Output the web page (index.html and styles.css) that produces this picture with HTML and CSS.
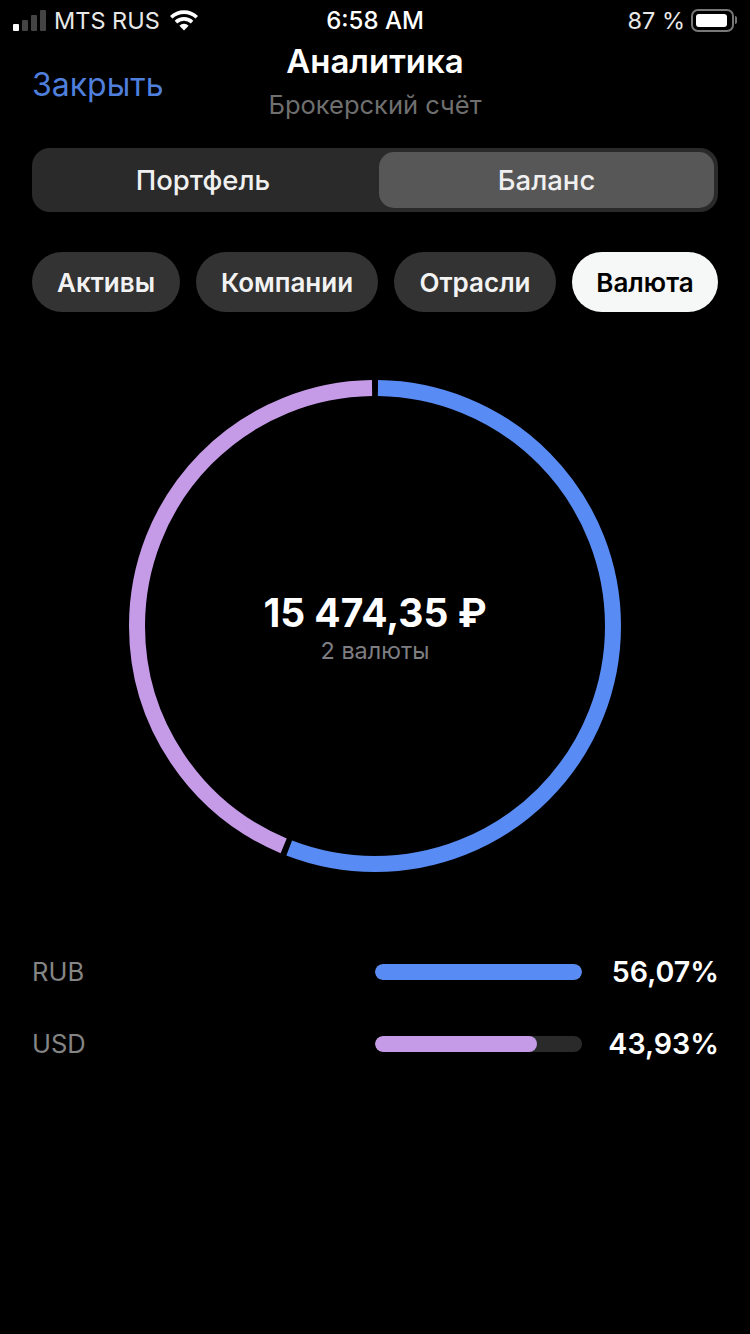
FILE: index.html
```html
<!DOCTYPE html>
<html>
<head>
    <meta charset="UTF-8">
    <title>Аналитика</title>

    <link rel="stylesheet" href="styles.css">
</head>
<body>

    <div class="status">
        <div class="status-left">
            <div class="signal">
                <i class="on b1"></i><i class="b2"></i><i class="b3"></i><i class="b4"></i>
            </div>
            <span>MTS RUS</span>
            <svg class="wifi" width="30" height="22" viewBox="0 0 30 22">
                <path d="M15 21.5l-4.6-4.8a6.6 6.6 0 0 1 9.2 0z" fill="#fff"/>
                <path d="M8.2 14.4l-2.5-2.6a13.4 13.4 0 0 1 18.6 0l-2.5 2.6a9.9 9.9 0 0 0-13.6 0z" fill="#fff"/>
                <path d="M3.5 9.5L1 6.9a20.2 20.2 0 0 1 28 0l-2.5 2.6a16.7 16.7 0 0 0-23 0z" fill="#fff"/>
            </svg>
        </div>
        <div class="status-time">6:58 AM</div>
        <div class="status-right">
            <span>87 %</span>
            <div class="battery"><div class="battery-fill"></div></div>
            <div class="battery-nub"></div>
        </div>
    </div>

    <header class="topo">
        <a class="fechar">Закрыть</a>
        <div class="titulo">
            <h1>Аналитика</h1>
            <h2>Брокерский счёт</h2>
        </div>
    </header>

    <div class="segmento">
        <div class="segmento-item">Портфель</div>
        <div class="segmento-item ativo">Баланс</div>
    </div>

    <div class="chips">
        <div class="chip c1">Активы</div>
        <div class="chip c2">Компании</div>
        <div class="chip c3">Отрасли</div>
        <div class="chip c4 ativo">Валюта</div>
    </div>

    <div class="grafico">
        <svg class="anel" width="500" height="500" viewBox="0 0 500 500">
            <circle cx="250" cy="250" r="238" fill="none" stroke="#588bf3" stroke-width="16" pathLength="100" stroke-dasharray="55.67 44.33" stroke-dashoffset="-0.2" transform="rotate(-90 250 250)"/>
            <circle cx="250" cy="250" r="238" fill="none" stroke="#c59be8" stroke-width="16" pathLength="100" stroke-dasharray="43.53 56.47" stroke-dashoffset="-56.27" transform="rotate(-90 250 250)"/>
        </svg>
        <div class="total">
            <div class="valor">15 474,35 ₽</div>
            <div class="legenda">2 валюты</div>
        </div>
    </div>

    <div class="linhas">
        <div class="linha">
            <span class="moeda">RUB</span>
            <div class="barra"><div class="preenche azul" style="width: 100%"></div></div>
            <span class="pct">56,07%</span>
        </div>
        <div class="linha">
            <span class="moeda">USD</span>
            <div class="barra"><div class="preenche lilas" style="width: 78.4%"></div></div>
            <span class="pct">43,93%</span>
        </div>
    </div>

</body>
</html>
```

FILE: styles.css
```css
* {
    box-sizing: border-box;
    margin: 0;
    padding: 0;
}

html, body {
    background: #000;
}

body {
    width: 750px;
    height: 1334px;
    overflow: hidden;
    color: #fff;
    font-family: Inter, "Noto Sans", sans-serif;
}

/* barra de status */
.status {
    display: grid;
    grid-template-columns: 1fr auto 1fr;
    align-items: center;
    height: 40px;
    padding: 0 13px;
    font-size: 23.5px;
    color: #e8e8e8;
}

.status-left {
    display: flex;
    align-items: center;
}

.signal {
    display: flex;
    align-items: flex-end;
    gap: 3px;
    height: 22px;
    margin-right: 8px;
}

.signal i {
    display: block;
    width: 6px;
    border-radius: 1px;
    background: #444;
}

.signal .on { background: #fff; }
.signal .b1 { height: 7px; }
.signal .b2 { height: 11px; }
.signal .b3 { height: 16px; }
.signal .b4 { height: 21px; }

.wifi {
    margin-left: 9px;
}

.status-time {
    font-size: 24px;
    font-weight: 500;
    color: #fff;
}

.status-right {
    display: flex;
    align-items: center;
    justify-content: flex-end;
}

.battery {
    width: 43px;
    height: 23px;
    margin-left: 6px;
    padding: 3px;
    border: 2px solid #777;
    border-radius: 7px;
}

.battery-fill {
    width: 31px;
    height: 100%;
    background: #fff;
    border-radius: 3px;
}

.battery-nub {
    width: 2px;
    height: 8px;
    margin-left: 1px;
    background: #777;
    border-radius: 0 2px 2px 0;
}

/* cabecalho */
.topo {
    position: relative;
    height: 88px;
    text-align: center;
}

.fechar {
    position: absolute;
    left: 32px;
    top: 25px;
    font-size: 32px;
    line-height: 40px;
    color: #4f7fdc;
}

.titulo h1 {
    padding-top: 1px;
    font-size: 33px;
    line-height: 40px;
    font-weight: 600;
}

.titulo h2 {
    margin-top: 9px;
    font-size: 25.5px;
    line-height: 30px;
    font-weight: 400;
    color: #6f6f6f;
}

/* abas */
.segmento {
    display: flex;
    height: 64px;
    margin: 20px 32px 0;
    padding: 4px;
    background: #2a2a2a;
    border-radius: 18px;
}

.segmento-item {
    width: 334px;
    display: flex;
    align-items: center;
    justify-content: center;
    font-size: 27.5px;
    font-weight: 500;
    color: #f0f0f0;
    border-radius: 15px;
}

.segmento-item.ativo {
    width: 335px;
    margin-left: 9px;
    background: #575757;
}

.chips {
    display: flex;
    gap: 16px;
    margin: 40px 32px 0;
}

.chip {
    display: flex;
    align-items: center;
    justify-content: center;
    height: 60px;
    font-size: 26px;
    font-weight: 600;
    color: #f2f2f2;
    background: #333;
    border-radius: 30px;
}

.chip.c1 { width: 148px; }
.chip.c2 { width: 182px; }
.chip.c3 { width: 162px; }
.chip.c4 { width: 146px; }

.chip.ativo {
    background: #f6f8f8;
    color: #000;
}

/* grafico */
.grafico {
    position: relative;
    width: 500px;
    height: 500px;
    margin: 64px auto 0;
}

.anel {
    display: block;
}

.total {
    position: absolute;
    left: 0;
    right: 0;
    top: 212px;
    text-align: center;
}

.valor {
    font-size: 39px;
    line-height: 50px;
    font-weight: 700;
}

.legenda {
    margin-top: -1px;
    font-size: 23.4px;
    line-height: 28px;
    color: #7e7e82;
}

/* linhas */
.linhas {
    margin: 77px 32px 0;
}

.linha {
    display: flex;
    align-items: center;
    height: 36px;
    margin-bottom: 36px;
}

.moeda {
    width: 343px;
    font-size: 25.5px;
    color: #858585;
}

.barra {
    width: 207px;
    height: 16px;
    margin-top: 2px;
    background: #2a2a2a;
    border-radius: 8px;
    overflow: hidden;
}

.preenche {
    height: 100%;
    border-radius: 8px;
}

.azul { background: #588bf3; }
.lilas { background: #c59be8; }

.pct {
    flex: 1;
    margin-right: -1px;
    text-align: right;
    font-size: 28.6px;
    font-weight: 600;
}
```
